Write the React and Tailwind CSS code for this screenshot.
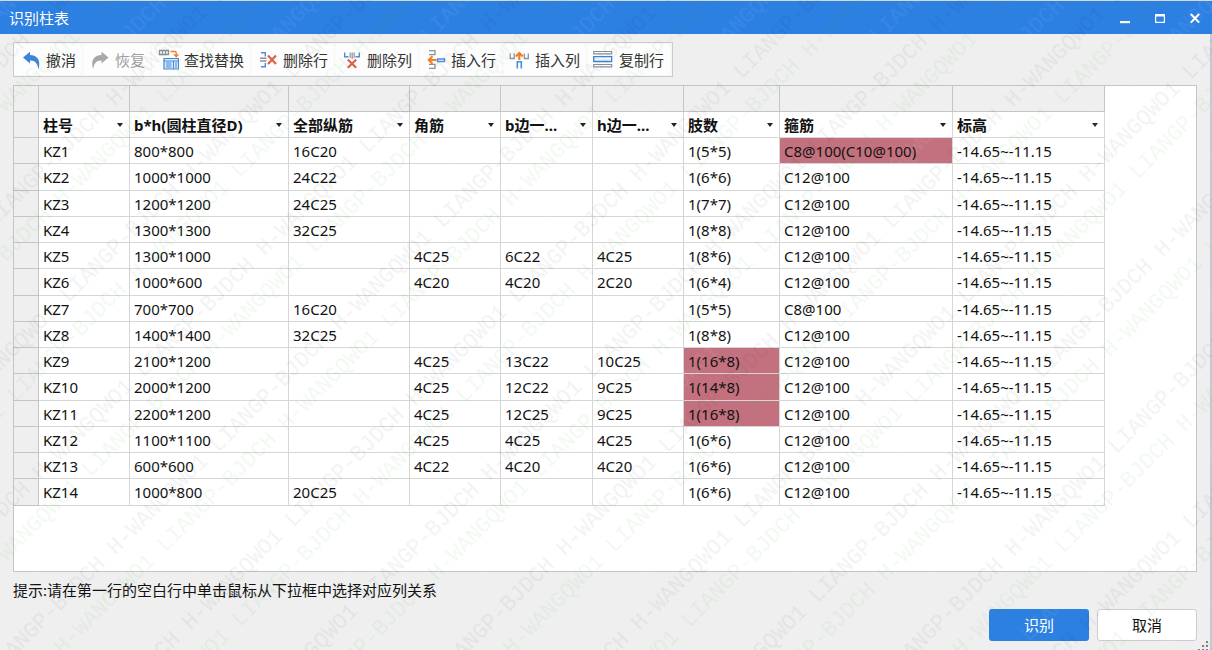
const COLUMNS = [
  { name: '柱号', width: 'w-[91px]' },
  { name: 'b*h(圆柱直径D)', width: 'w-[159px]' },
  { name: '全部纵筋', width: 'w-[121px]' },
  { name: '角筋', width: 'w-[91px]' },
  { name: 'b边一...', width: 'w-[92px]' },
  { name: 'h边一...', width: 'w-[91px]' },
  { name: '肢数', width: 'w-[96px]' },
  { name: '箍筋', width: 'w-[173px]' },
  { name: '标高', width: 'w-[152px]' },
];

const LEVEL = '-14.65~-11.15';

const ROWS = [
  ['KZ1', '800*800', '16C20', '', '', '', '1(5*5)', 'C8@100(C10@100)', LEVEL],
  ['KZ2', '1000*1000', '24C22', '', '', '', '1(6*6)', 'C12@100', LEVEL],
  ['KZ3', '1200*1200', '24C25', '', '', '', '1(7*7)', 'C12@100', LEVEL],
  ['KZ4', '1300*1300', '32C25', '', '', '', '1(8*8)', 'C12@100', LEVEL],
  ['KZ5', '1300*1000', '', '4C25', '6C22', '4C25', '1(8*6)', 'C12@100', LEVEL],
  ['KZ6', '1000*600', '', '4C20', '4C20', '2C20', '1(6*4)', 'C12@100', LEVEL],
  ['KZ7', '700*700', '16C20', '', '', '', '1(5*5)', 'C8@100', LEVEL],
  ['KZ8', '1400*1400', '32C25', '', '', '', '1(8*8)', 'C12@100', LEVEL],
  ['KZ9', '2100*1200', '', '4C25', '13C22', '10C25', '1(16*8)', 'C12@100', LEVEL],
  ['KZ10', '2000*1200', '', '4C25', '12C22', '9C25', '1(14*8)', 'C12@100', LEVEL],
  ['KZ11', '2200*1200', '', '4C25', '12C25', '9C25', '1(16*8)', 'C12@100', LEVEL],
  ['KZ12', '1100*1100', '', '4C25', '4C25', '4C25', '1(6*6)', 'C12@100', LEVEL],
  ['KZ13', '600*600', '', '4C22', '4C20', '4C20', '1(6*6)', 'C12@100', LEVEL],
  ['KZ14', '1000*800', '20C25', '', '', '', '1(6*6)', 'C12@100', LEVEL],
];

// Cells the recogniser could not validate, as "row-column"
const INVALID = ['0-7', '8-6', '9-6', '10-6'];

const Icon = ({ children }) => (
  <svg viewBox="0 0 21 21" className="size-[21px] shrink-0" fill="none" aria-hidden="true">
    {children}
  </svg>
);

const UndoIcon = () => (
  <Icon>
    <path d="M3 8.5 10 2.8V6C16.5 6 21.5 10.5 18.3 20.5 18 15 15.5 11.6 10 11.6V14.6Z" fill="#3b86d8" />
  </Icon>
);

const RedoIcon = () => (
  <Icon>
    <path d="M19.5 8.5 12.5 2.8V6C6 6 1 10.5 4.2 20.5 4.5 15 7 11.6 12.5 11.6V14.6Z" fill="#a6a6a6" />
  </Icon>
);

const ReplaceIcon = () => (
  <Icon>
    <path d="M1.5 1.5h9v4h-9zM4.5 1.5v4M7.5 1.5v4" stroke="#8a9299" strokeWidth="1.3" />
    <path d="M12.5 2.5h4.5q1.2 0 1.2 1.2V7M16 5.3l2.2 2.4 2.2-2.4" stroke="#f08030" strokeWidth="1.4" />
    <path d="M6 9.5h14.5v10.5H6z" fill="#dcebfa" stroke="#3f86d6" strokeWidth="1.2" />
    <path d="M6 12h14.5M15.5 12v8M8 14h5.5M8 16h5.5M8 18h5.5M17 14h2M17 16h2M17 18h2" stroke="#3f86d6" />
  </Icon>
);

const DeleteRowIcon = () => (
  <Icon>
    <path d="M4 3.8h4.3V7.5M4 17.7h4.3V14" stroke="#4a8fdc" strokeWidth="1.4" />
    <path d="M3 9.3h6.5M3 12h6.5" stroke="#8a9299" strokeWidth="1.4" />
    <path d="m11 6.5 8 8.5M19 6.5 11 15" stroke="#dc6047" strokeWidth="2.2" />
  </Icon>
);

const DeleteColumnIcon = () => (
  <Icon>
    <path d="M3.7 3.5v4.3h3.8M18.3 3.5v4.3h-3.8" stroke="#4a8fdc" strokeWidth="1.4" />
    <path d="M9.2 3.5V9M11.2 3.5V10M13.2 3.5V9" stroke="#8a9299" strokeWidth="1.2" />
    <path d="m6.8 10.5 8.4 8.3M15.2 10.5l-8.4 8.3" stroke="#dc6047" strokeWidth="2.2" />
  </Icon>
);

const InsertRowIcon = () => (
  <Icon>
    <path d="M4 1.7h6v4H4M4 15.3h6v4H4" stroke="#8a9299" strokeWidth="1.3" />
    <path d="M4 11h7.5M7.5 7.3 3.8 11l3.7 3.7" stroke="#f08020" strokeWidth="2.2" />
    <path d="M12.5 10h7v2.5h-7z" stroke="#4a8fdc" strokeWidth="1.4" />
  </Icon>
);

const InsertColumnIcon = () => (
  <Icon>
    <path d="M1.2 4.5v5h4v-5M15.3 4.5v5h4v-5" stroke="#8a9299" strokeWidth="1.3" />
    <path d="M10.3 11V4M6.8 7.5 10.3 4l3.5 3.5" stroke="#f08020" strokeWidth="2.2" />
    <path d="M8.3 19.5v-6.8h4v6.8" stroke="#4a8fdc" strokeWidth="1.6" />
  </Icon>
);

const CopyRowIcon = () => (
  <Icon>
    <path d="M.7 2.5h18v2.3h-18zM.7 15.5h18v2.3h-18z" stroke="#8a9299" strokeWidth="1.2" />
    <path d="M.7 7.7h18v4.8h-18z" fill="#f3f8fe" stroke="#3f86d6" strokeWidth="1.3" />
  </Icon>
);

const TOOLS = [
  { label: '撤消', icon: UndoIcon },
  { label: '恢复', icon: RedoIcon, disabled: true },
  { label: '查找替换', icon: ReplaceIcon },
  { label: '删除行', icon: DeleteRowIcon },
  { label: '删除列', icon: DeleteColumnIcon },
  { label: '插入行', icon: InsertRowIcon },
  { label: '插入列', icon: InsertColumnIcon },
  { label: '复制行', icon: CopyRowIcon },
];

const TitleBar = () => (
  <header className="flex h-[33px] shrink-0 items-center justify-between bg-[#2c80e2] pl-[9px] text-white">
    <h1>识别柱表</h1>
    <div className="flex h-full">
      <button type="button" aria-label="最小化" className="flex w-[35px] items-center justify-center">
        <svg viewBox="0 0 12 12" className="size-3" aria-hidden="true">
          <path d="M1 9h10v2.2H1z" fill="#fff" />
        </svg>
      </button>
      <button type="button" aria-label="最大化" className="flex w-[35px] items-center justify-center">
        <svg viewBox="0 0 12 12" className="size-3" aria-hidden="true">
          <path d="M1 2h10v9H1zM2.2 4.5v5.3h7.6V4.5z" fill="#fff" fillRule="evenodd" />
        </svg>
      </button>
      <button type="button" aria-label="关闭" className="flex w-[35px] items-center justify-center">
        <svg viewBox="0 0 12 12" className="size-3" aria-hidden="true">
          <path d="m1.8 2 8.4 8.6M10.2 2 1.8 10.6" stroke="#fff" strokeWidth="2" />
        </svg>
      </button>
    </div>
  </header>
);

const Toolbar = () => (
  <div role="toolbar" className="flex h-[35px] gap-px self-start border border-[#c6cbce] bg-[#f7f7f7] py-px pr-[2px]">
    {TOOLS.map(({ label, icon: ToolIcon, disabled }) => (
      <button
        key={label}
        type="button"
        disabled={disabled}
        className="flex items-center gap-[5px] rounded-sm bg-[#fdfdfd] px-[6px] whitespace-nowrap text-[#333] disabled:text-[#a0a0a0]"
      >
        <ToolIcon />
        {label}
      </button>
    ))}
  </div>
);

const ColumnSelect = ({ name }) => (
  <div className="relative">
    <select aria-label={name} className="w-full appearance-none bg-transparent pl-1 leading-5 font-bold">
      <option>{name}</option>
    </select>
    <svg viewBox="0 0 6 4" className="pointer-events-none absolute top-2 right-[6px] h-1 w-1.5" aria-hidden="true">
      <path d="M0 0h6L3 4z" fill="#222" />
    </svg>
  </div>
);

const ColumnTable = () => (
  <table className="-mt-px -ml-px w-[1092px] table-fixed border-collapse text-left leading-5">
    <colgroup>
      <col className="w-[25px]" />
      {COLUMNS.map((c) => <col key={c.name} className={c.width} />)}
    </colgroup>
    <thead>
      <tr className="h-[26px] bg-[#efefef]">
        <td className="border border-[#c4c4c4]" />
        {COLUMNS.map((c) => <td key={c.name} className="border border-[#c4c4c4]" />)}
      </tr>
      <tr className="h-[26px]">
        <td className="border border-[#c4c4c4] bg-[#efefef]" />
        {COLUMNS.map((c) => (
          <th key={c.name} className="border border-[#d6d6d6] p-0">
            <ColumnSelect name={c.name} />
          </th>
        ))}
      </tr>
    </thead>
    <tbody>
      {ROWS.map((row, r) => (
        <tr key={row[0]} className="h-[26px] nth-[4n+2]:h-[27px]">
          <td className="border border-[#c4c4c4] bg-[#efefef]" />
          {row.map((value, c) => (
            <td
              key={COLUMNS[c].name}
              className={`border border-[#d6d6d6] py-0 pr-0 pl-1 whitespace-nowrap ${INVALID.includes(`${r}-${c}`) ? 'bg-[#c4717f]' : ''}`}
            >
              {value}
            </td>
          ))}
        </tr>
      ))}
    </tbody>
  </table>
);

const MARK = 'H-WANGQWO1 LIANGP-BJDCH';

// Diagonal user stamp laid over the whole window, three tints per tile
const Watermark = () => (
  <svg className="pointer-events-none absolute inset-0 size-full" aria-hidden="true">
    <defs>
      <pattern
        id="stamp"
        width="317"
        height="106"
        patternUnits="userSpaceOnUse"
        patternTransform="translate(190 620) rotate(-45) translate(-7 -12)"
      >
        <g fontFamily="Liberation Mono, monospace" fontSize="22">
          <text x="0" y="20" fill="#000" fillOpacity="0.05">{MARK}</text>
          <g fill="#3c9a3c" fillOpacity="0.07">
            <text x="209" y="53">{MARK}</text>
            <text x="-108" y="53">{MARK}</text>
          </g>
          <g fill="#fff" fillOpacity="0.06">
            <text x="122" y="91">{MARK}</text>
            <text x="-195" y="91">{MARK}</text>
          </g>
        </g>
      </pattern>
    </defs>
    <rect width="100%" height="100%" fill="url(#stamp)" />
  </svg>
);

const App = () => (
  <div className="relative flex h-screen flex-col overflow-hidden bg-[#efefef] font-['Noto_Sans','Noto_Sans_CJK_SC',sans-serif] text-[15px] leading-5 text-[#111]">
    <div className="h-px shrink-0 bg-[#d5d9dd]" />
    <TitleBar />
    <main className="flex min-h-0 flex-1 flex-col border-r-2 border-[#c3cad3] pt-2 pr-[13px] pb-[9px] pl-[13px]">
      <Toolbar />
      <div className="mt-2 min-h-0 flex-1 overflow-hidden border border-[#c4c4c4] bg-white">
        <ColumnTable />
      </div>
      <p className="mt-2">提示:请在第一行的空白行中单击鼠标从下拉框中选择对应列关系</p>
      <div className="mt-[9px] flex justify-end gap-2">
        <button type="button" className="h-8 w-[100px] rounded-[3px] bg-[#2c80e2] text-white">识别</button>
        <button type="button" className="h-8 w-[100px] rounded-[3px] border border-[#cdcdcd] bg-white">取消</button>
      </div>
    </main>
    <svg viewBox="0 0 12 10" className="absolute right-[3px] bottom-0 h-2.5 w-3" aria-hidden="true">
      <path d="M9 1h2v2H9zM5 5h2v2H5zM9 5h2v2H9zM1 9h2v1H1zM5 9h2v1H5zM9 9h2v1H9z" fill="#7d8287" />
    </svg>
    <Watermark />
  </div>
);

export default App;
